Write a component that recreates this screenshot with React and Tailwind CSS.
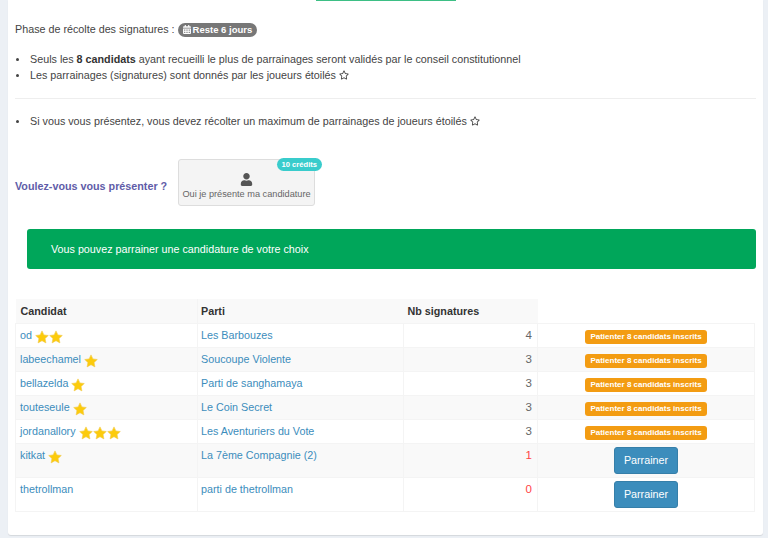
import React from "react";
import { FaCalendarAlt, FaRegStar, FaUser } from "react-icons/fa";

const rows = [
  { name: "od", stars: 2, parti: "Les Barbouzes", nb: 4 },
  { name: "labeechamel", stars: 1, parti: "Soucoupe Violente", nb: 3 },
  { name: "bellazelda", stars: 1, parti: "Parti de sanghamaya", nb: 3 },
  { name: "touteseule", stars: 1, parti: "Le Coin Secret", nb: 3 },
  { name: "jordanallory", stars: 3, parti: "Les Aventuriers du Vote", nb: 3 },
  { name: "kitkat", stars: 1, parti: "La 7ème Compagnie (2)", nb: 1, canSign: true },
  { name: "thetrollman", stars: 0, parti: "parti de thetrollman", nb: 0, canSign: true },
];

function GoldStar() {
  return (
    <svg viewBox="0 0 24 24" className="inline-block h-[14px] w-[14px] align-[-5px]">
      <path
        d="M12 1.5l3.3 6.9 7.5 1-5.5 5.2 1.4 7.5L12 18.4l-6.7 3.7 1.4-7.5L1.2 9.4l7.5-1z"
        fill="#fccb0c"
        stroke="#f2c94c"
        strokeWidth="1"
        strokeLinejoin="round"
      />
    </svg>
  );
}

function Bullet({ children }) {
  return (
    <li className="flex items-start">
      <span className="ml-px mr-[11px] mt-[7px] h-[3px] w-[3px] shrink-0 rounded-full bg-[#444]" />
      <span>{children}</span>
    </li>
  );
}

export default function App() {
  return (
    <div className="h-[538px] overflow-hidden bg-[#ecf0f5] px-2 font-['Liberation_Sans',Arial,sans-serif] text-[10.75px] text-[#444]">
      <div className="h-[535px] w-[755px] rounded-b-[3px] bg-white px-[7px] shadow-[0_1px_1px_rgba(0,0,0,0.1)]">
        <div className="mx-auto h-px w-[140px] bg-[#3dbf85]" />

        <p className="mt-5 flex items-center gap-[3px] leading-[17px]">
          Phase de récolte des signatures :
          <span className="inline-flex h-[14px] items-center gap-[2px] rounded-full bg-[#777] px-[5px] text-[9.5px] font-bold text-white">
            <FaCalendarAlt className="h-[9px] w-[8px]" />
            Reste 6 jours
          </span>
        </p>

        <ul className="mt-[13px] leading-[16px]">
          <Bullet>
            Seuls les <b className="text-[#333]">8 candidats</b> ayant recueilli le plus de parrainages seront validés par le conseil constitutionnel
          </Bullet>
          <Bullet>
            Les parrainages (signatures) sont donnés par les joueurs étoilés{" "}
            <FaRegStar className="inline-block h-[10px] w-[10px] align-[-1px]" />
          </Bullet>
        </ul>

        <hr className="mt-[15px] border-[#eee]" />

        <ul className="mt-[14px] leading-[16px]">
          <Bullet>
            Si vous vous présentez, vous devez récolter un maximum de parrainages de joueurs étoilés{" "}
            <FaRegStar className="inline-block h-[10px] w-[10px] align-[-1px]" />
          </Bullet>
        </ul>

        <div className="mt-[30px] flex items-center">
          <span className="w-[163px] whitespace-nowrap pt-[7px] font-bold text-[#605ca8]">Voulez-vous vous présenter ?</span>
          <button className="relative flex h-[47px] w-[137px] flex-col items-center justify-end whitespace-nowrap rounded-[3px] border border-[#ddd] bg-[#f4f4f4] pb-[5px] text-[9.2px] leading-[12px] text-[#666]">
            <span className="absolute -right-[8px] -top-[2px] rounded-full bg-[#39cccc] px-[5px] text-[7.6px] font-bold leading-[13px] text-white">
              10 crédits
            </span>
            <FaUser className="mb-[2px] h-[13px] w-[13px] text-[#555]" />
            Oui je présente ma candidature
          </button>
        </div>

        <div className="ml-3 mt-[23px] flex h-10 w-[729px] items-center rounded-[3px] bg-[#00a65a] pl-6 text-white">
          Vous pouvez parrainer une candidature de votre choix
        </div>

        <table className="mt-[30px] w-[740px] table-fixed border-collapse">
          <thead>
            <tr className="h-6 text-left text-[#333]">
              <th className="w-[182px] bg-[#f9f9f9] px-[5px] font-bold">Candidat</th>
              <th className="w-[206px] border-l border-[#f4f4f4] bg-[#f9f9f9] px-[3px] font-bold">Parti</th>
              <th className="w-[134px] bg-[#f9f9f9] px-[4px] font-bold">Nb signatures</th>
              <th />
            </tr>
          </thead>
          <tbody>
            {rows.map((r, i) => (
              <tr key={r.name} className={i % 2 ? "bg-[#f9f9f9]" : "bg-white"}>
                <td className="border border-[#f4f4f4] px-[4px] pb-0 pt-[4px] align-top leading-[14px] text-[#3c8dbc]">
                  <div className="h-[19px] whitespace-nowrap">
                    {r.name}{" "}
                    {Array.from({ length: r.stars }).map((_, k) => (
                      <GoldStar key={k} />
                    ))}
                  </div>
                </td>
                <td className="border border-[#f4f4f4] px-[3px] pb-0 pt-[4px] align-top leading-[14px] text-[#3c8dbc]">{r.parti}</td>
                <td className={`border border-[#f4f4f4] px-[5px] pb-0 pt-[4px] text-right align-top text-[11.5px] leading-[14px] ${r.nb < 2 ? "text-[#f44]" : "text-[#666]"}`}>
                  {r.nb}
                </td>
                <td className="border border-[#f4f4f4] p-0 text-center align-top">
                  {r.canSign ? (
                    <button className="mx-auto my-[3px] block h-[27px] w-[64px] rounded-[3px] border border-[#367fa9] bg-[#3c8dbc] text-white">
                      Parrainer
                    </button>
                  ) : (
                    <span className="mx-auto mt-[6px] block h-[14px] w-[122px] whitespace-nowrap rounded-[3px] bg-[#f39c12] text-center text-[8px] font-bold leading-[14px] text-white">
                      Patienter 8 candidats inscrits
                    </span>
                  )}
                </td>
              </tr>
            ))}
          </tbody>
        </table>
      </div>
    </div>
  );
}
